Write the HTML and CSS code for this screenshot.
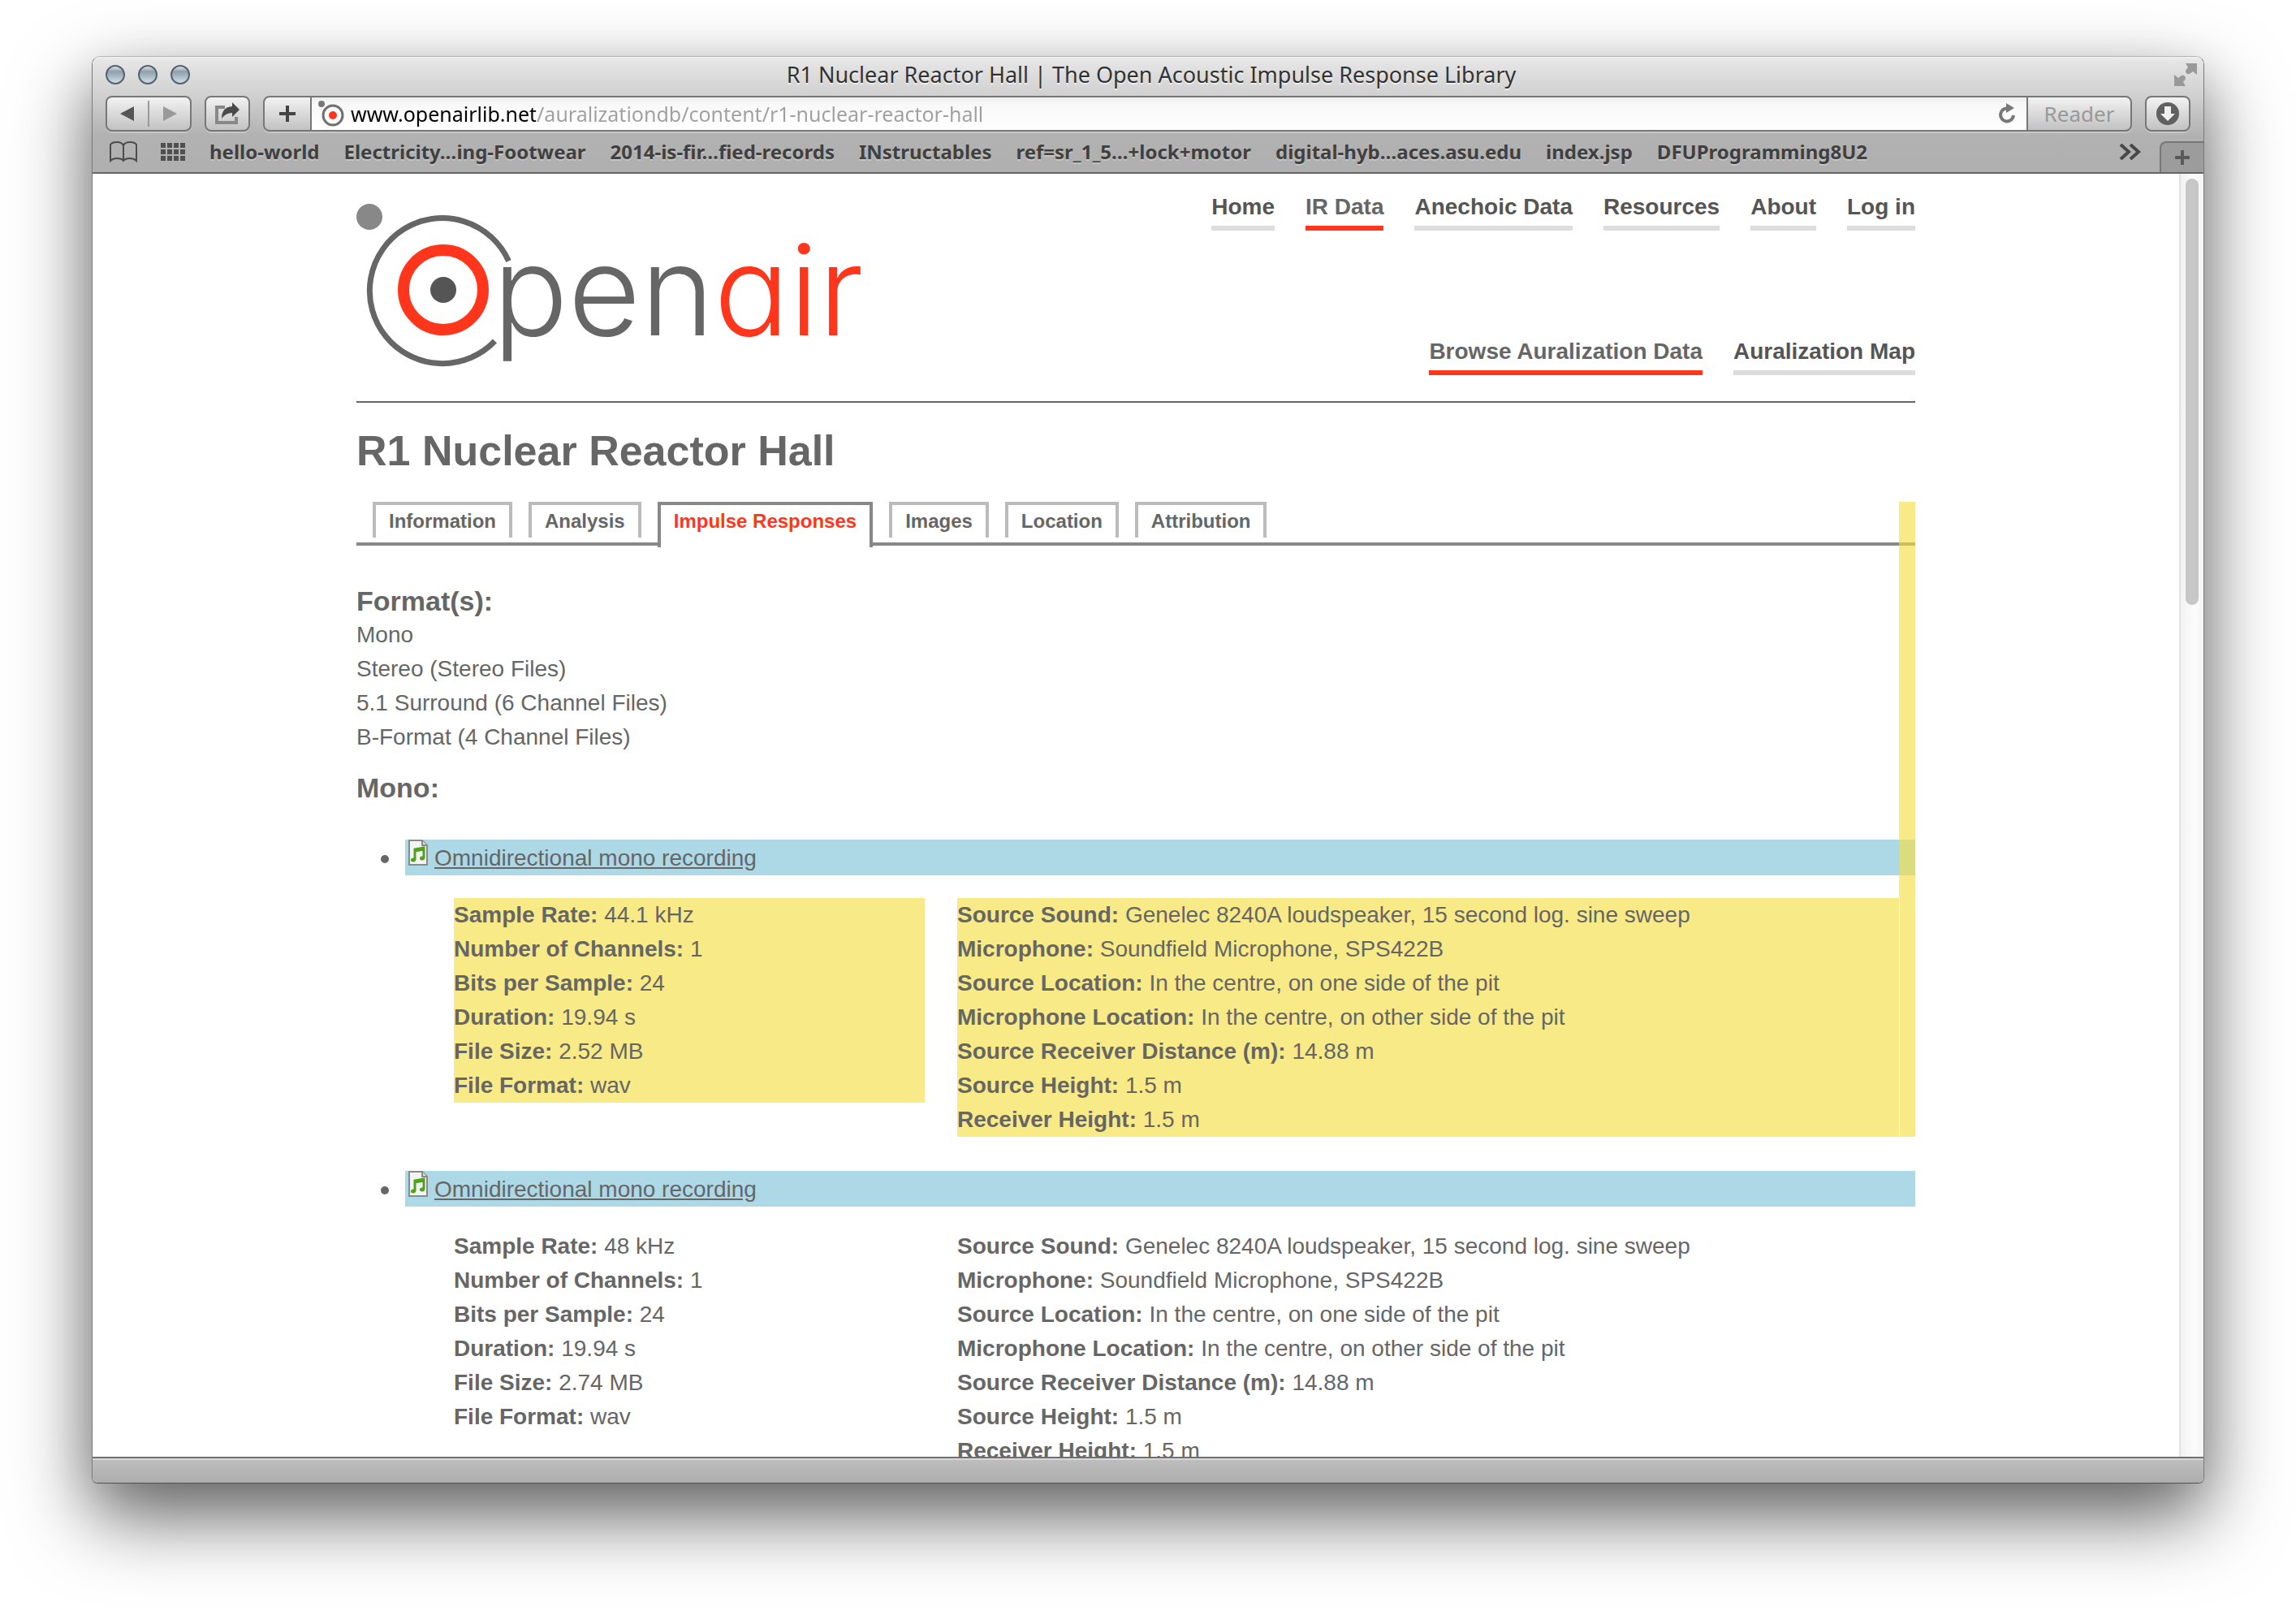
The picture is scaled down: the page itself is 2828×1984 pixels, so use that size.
FILE: index.html
```html
<!DOCTYPE html>
<html lang="en">
<head>
<meta charset="utf-8">
<title>R1 Nuclear Reactor Hall | The Open Acoustic Impulse Response Library</title>
<link rel="stylesheet" href="styles.css">
</head>
<body>
<div class="window">
  <header class="chrome">
    <div class="titlebar">
      <div class="lights">
        <button class="light" aria-label="Close"></button>
        <button class="light" aria-label="Minimize"></button>
        <button class="light" aria-label="Zoom"></button>
      </div>
      <div class="window-title">R1 Nuclear Reactor Hall | The Open Acoustic Impulse Response Library</div>
      <button class="plain fullscreen" aria-label="Full screen">
        <svg width="28" height="28" viewBox="0 0 28 28" fill="#999"><path d="M14 0h14v14l-5-4-4 3q-5 1-5-4l3-4z"/><path d="M0 14l5 4 4-3q5-1 5 4l-3 4 3 5H0z"/></svg>
      </button>
    </div>
    <div class="toolbar">
      <div class="tool nav">
        <button class="plain nav-btn" aria-label="Back"><svg width="20" height="20" viewBox="0 0 20 20"><path d="M18 1v18L1 10z" fill="#555"/></svg></button>
        <button class="plain nav-btn" aria-label="Forward"><svg width="20" height="20" viewBox="0 0 20 20"><path d="M2 1v18l17-9z" fill="#999"/></svg></button>
      </div>
      <button class="tool share" aria-label="Share">
        <svg width="34" height="28" viewBox="0 0 34 28"><path d="M14 6H4v19h24v-7" fill="none" stroke="#888" stroke-width="4"/><path d="M10 20q0-14 13-15V0l9 9-9 9v-5q-8 0-13 7z" fill="#4a4a4a"/></svg>
      </button>
      <div class="tool address">
        <button class="plain add" aria-label="Add bookmark"><svg width="20" height="20" viewBox="0 0 20 20"><path d="M10 0v20M0 10h20" stroke="#444" stroke-width="4"/></svg></button>
        <div class="field">
          <svg class="favicon" width="32" height="32" viewBox="0 0 32 32"><circle cx="4" cy="4" r="4" fill="#777"/><circle cx="18" cy="18" r="12" fill="none" stroke="#707070" stroke-width="3"/><circle cx="18" cy="18" r="5" fill="#ff361c"/></svg>
          <input class="url" type="text" aria-label="Address" value="www.openairlib.net/auralizationdb/content/r1-nuclear-reactor-hall">
          <button class="plain reload" aria-label="Reload"><svg width="24" height="28" viewBox="0 0 24 28"><path d="M13 7.500A8 8 0 1 0 20 16" fill="none" stroke="#777" stroke-width="4"/><path d="M11 1l10 6-10 6z" fill="#777"/></svg></button>
        </div>
        <button class="plain reader">Reader</button>
      </div>
      <button class="tool downloads" aria-label="Downloads">
        <svg width="30" height="30" viewBox="0 0 30 30"><circle cx="15" cy="15" r="14" fill="#606060"/><path d="M11 6h8v9h5l-9 9-9-9h5z" fill="#f0f0f0"/></svg>
      </button>
    </div>
    <nav class="bookmarks">
      <button class="plain" aria-label="Show bookmarks"><svg width="36" height="26" viewBox="0 0 36 26" fill="none" stroke="#4c4c4c" stroke-width="2"><path d="M18 5q-2-4-8-4-6 0-8 3v20q3-3 8-3 6 0 8 3 2-3 8-3 5 0 8 3V4q-2-3-8-3-6 0-8 4zM18 5v19"/></svg></button>
      <button class="plain topsites" aria-label="Top sites"><svg width="32" height="22" viewBox="0 0 32 22"><path d="M0 3h32M0 11h32M0 19h32" stroke="#505050" stroke-width="6" stroke-dasharray="6 2"/></svg></button>
      <div class="bookmark-list">
        <a href="#">hello-world</a>
        <a href="#">Electricity…ing-Footwear</a>
        <a href="#">2014-is-fir…fied-records</a>
        <a href="#">INstructables</a>
        <a href="#">ref=sr_1_5…+lock+motor</a>
        <a href="#">digital-hyb…aces.asu.edu</a>
        <a href="#">index.jsp</a>
        <a href="#">DFUProgramming8U2</a>
      </div>
      <button class="plain more" aria-label="More bookmarks"><svg width="28" height="20" viewBox="0 0 28 20" fill="none" stroke="#484848" stroke-width="4"><path d="M2 1l10 9-10 9M14 1l10 9-10 9"/></svg></button>
      <button class="plain new-tab" aria-label="New tab"><svg width="18" height="18" viewBox="0 0 18 18"><path d="M9 0v18M0 9h18" stroke="#5a5a5a" stroke-width="4"/></svg></button>
    </nav>
  </header>

  <div class="viewport">
    <div class="page">
      <div class="container">
        <div class="site-header">
          <a href="#" class="logo" aria-label="Openair home">
            <svg width="624" height="200" viewBox="0 0 624 200">
              <circle cx="16" cy="17" r="16" fill="#888"/>
              <path d="M187.500 71.500A89.500 89.500 0 1 0 170.500 170" fill="none" stroke="#666" stroke-width="7"/>
              <circle cx="107" cy="107" r="49" fill="none" stroke="#ff361c" stroke-width="14"/>
              <circle cx="107" cy="107" r="16" fill="#555"/>
              <text class="wordmark" x="168" y="163" fill="#666">pen<tspan fill="#ff361c">air</tspan></text>
            </svg>
          </a>
          <div class="menus">
            <nav class="menu">
              <a href="#">Home</a>
              <a href="#" class="current">IR Data</a>
              <a href="#">Anechoic Data</a>
              <a href="#">Resources</a>
              <a href="#">About</a>
              <a href="#">Log in</a>
            </nav>
            <nav class="menu">
              <a href="#" class="current">Browse Auralization Data</a>
              <a href="#">Auralization Map</a>
            </nav>
          </div>
        </div>
        <h1>R1 Nuclear Reactor Hall</h1>
        <main class="content">
          <nav class="tabs">
            <a href="#">Information</a>
            <a href="#">Analysis</a>
            <a href="#" class="active">Impulse Responses</a>
            <a href="#">Images</a>
            <a href="#">Location</a>
            <a href="#">Attribution</a>
          </nav>
          <h2>Format(s):</h2>
          <div class="formats">
            <div>Mono</div>
            <div>Stereo (Stereo Files)</div>
            <div>5.1 Surround (6 Channel Files)</div>
            <div>B-Format (4 Channel Files)</div>
          </div>
          <h2>Mono:</h2>
          <ul class="recordings">
            <li>
              <div class="file"><svg class="file-icon" width="24" height="32" viewBox="0 0 24 32"><path d="M1 1h16l6 6v24H1z" fill="#f4f4f4" stroke="#8a8a86" stroke-width="2"/><path d="M17 1v6h6" fill="#ddd" stroke="#8a8a86" stroke-width="2"/><path d="M8 25V12l11-2v13M8 14l11-2" fill="none" stroke="#4ea21c" stroke-width="3"/><ellipse cx="6" cy="25" rx="3" ry="2.500" fill="#4ea21c"/><ellipse cx="17" cy="23" rx="3" ry="2.500" fill="#4ea21c"/></svg><a href="#">Omnidirectional mono recording</a></div>
              <div class="details">
                <div class="column marked">
                  <div><b>Sample Rate:</b> 44.1 kHz</div>
                  <div><b>Number of Channels:</b> 1</div>
                  <div><b>Bits per Sample:</b> 24</div>
                  <div><b>Duration:</b> 19.94 s</div>
                  <div><b>File Size:</b> 2.52 MB</div>
                  <div><b>File Format:</b> wav</div>
                </div>
                <div class="column wide marked">
                  <div><b>Source Sound:</b> Genelec 8240A loudspeaker, 15 second log. sine sweep</div>
                  <div><b>Microphone:</b> Soundfield Microphone, SPS422B</div>
                  <div><b>Source Location:</b> In the centre, on one side of the pit</div>
                  <div><b>Microphone Location:</b> In the centre, on other side of the pit</div>
                  <div><b>Source Receiver Distance (m):</b> 14.88 m</div>
                  <div><b>Source Height:</b> 1.5 m</div>
                  <div><b>Receiver Height:</b> 1.5 m</div>
                </div>
              </div>
            </li>
            <li>
              <div class="file"><svg class="file-icon" width="24" height="32" viewBox="0 0 24 32"><path d="M1 1h16l6 6v24H1z" fill="#f4f4f4" stroke="#8a8a86" stroke-width="2"/><path d="M17 1v6h6" fill="#ddd" stroke="#8a8a86" stroke-width="2"/><path d="M8 25V12l11-2v13M8 14l11-2" fill="none" stroke="#4ea21c" stroke-width="3"/><ellipse cx="6" cy="25" rx="3" ry="2.500" fill="#4ea21c"/><ellipse cx="17" cy="23" rx="3" ry="2.500" fill="#4ea21c"/></svg><a href="#">Omnidirectional mono recording</a></div>
              <div class="details">
                <div class="column">
                  <div><b>Sample Rate:</b> 48 kHz</div>
                  <div><b>Number of Channels:</b> 1</div>
                  <div><b>Bits per Sample:</b> 24</div>
                  <div><b>Duration:</b> 19.94 s</div>
                  <div><b>File Size:</b> 2.74 MB</div>
                  <div><b>File Format:</b> wav</div>
                </div>
                <div class="column wide">
                  <div><b>Source Sound:</b> Genelec 8240A loudspeaker, 15 second log. sine sweep</div>
                  <div><b>Microphone:</b> Soundfield Microphone, SPS422B</div>
                  <div><b>Source Location:</b> In the centre, on one side of the pit</div>
                  <div><b>Microphone Location:</b> In the centre, on other side of the pit</div>
                  <div><b>Source Receiver Distance (m):</b> 14.88 m</div>
                  <div><b>Source Height:</b> 1.5 m</div>
                  <div><b>Receiver Height:</b> 1.5 m</div>
                </div>
              </div>
            </li>
          </ul>
          <div class="margin-mark"></div>
        </main>
      </div>
    </div>
    <div class="scrollbar"><div class="thumb"></div></div>
  </div>
  <footer class="statusbar"></footer>
</div>
</body>
</html>
```
FILE: styles.css
```css
* { box-sizing: border-box; }

body {
  margin: 0;
  height: 100vh;
  padding: 69px 113px 157px;
  display: flex;
  overflow: hidden;
  background: #fff;
  color: #666;
  font: 28px/42px "Liberation Sans", Arial, sans-serif;
}

a { color: inherit; }
svg { display: block; }
button, input { font: inherit; color: inherit; padding: 0; }

.plain { border: 0; background: none; display: flex; align-items: center; justify-content: center; }

/* Browser window */
.window {
  flex: 1;
  min-width: 0;
  display: flex;
  flex-direction: column;
  overflow: hidden;
  border: 1px solid #7a7a7a;
  border-top-color: #b4b4b4;
  border-bottom-color: #505050;
  border-radius: 10px 10px 7px 7px;
  background: #fff;
  box-shadow: 0 40px 96px rgba(0, 0, 0, 0.6), 0 20px 60px rgba(0, 0, 0, 0.1);
}

.chrome {
  background: linear-gradient(#f0f0f0, #e6e6e6 4px, #d0d0d0 48px, #b2b2b2 96px, #afafaf);
  border-bottom: 2px solid #666;
  font-family: "Noto Sans", "Open Sans", sans-serif;
}

.titlebar { height: 48px; display: flex; align-items: center; padding: 0 8px 4px 16px; }
.lights { display: flex; gap: 16px; flex: 1; }
.light {
  width: 24px;
  height: 24px;
  border: 2px solid #56626e;
  border-radius: 50%;
  background: linear-gradient(#dfe6ea, #8fa0ab 30%, #a9b9c4 60%, #d5dfe6);
}
.window-title { font-size: 27px; line-height: 36px; color: #333; text-shadow: 0 2px 0 #eee; }
.fullscreen { flex: 1; justify-content: flex-end; }

.toolbar { display: flex; padding: 0 16px; gap: 16px; }
.tool {
  height: 44px;
  border: 2px solid #777;
  border-radius: 8px;
  background: linear-gradient(#f2f2f2, #c2c2c2);
  box-shadow: 0 2px 0 #c6c6c6;
  display: flex;
  align-items: center;
  justify-content: center;
}
.nav { width: 106px; }
.nav-btn { flex: 1; height: 32px; }
.nav-btn + .nav-btn { border-left: 2px solid #999; }
.share { width: 56px; }
.downloads { width: 56px; }
.address { flex: 1; align-items: stretch; overflow: hidden; }
.add { width: 58px; border-right: 2px solid #777; }
.field {
  flex: 1;
  display: flex;
  align-items: center;
  padding: 0 12px 0 8px;
  background: linear-gradient(#eee, #f8f8f8 8px, #fff);
}
.url {
  flex: 1;
  min-width: 0;
  height: 36px;
  margin-left: 8px;
  border: 0;
  font-size: 25px;
  color: transparent;
  background: linear-gradient(90deg, #000 228px, #a0a0a0 228px);
  background-clip: text;
  -webkit-background-clip: text;
}
.reader { width: 128px; border-left: 2px solid #777; font-size: 26px; color: #999; }

.bookmarks {
  height: 50px;
  display: flex;
  align-items: center;
  padding-left: 20px;
}
.topsites { margin: 0 28px; }
.bookmark-list { flex: 1; display: flex; gap: 30px; font-size: 24px; font-weight: 700; color: #404040; white-space: nowrap; }
.bookmark-list a { text-decoration: none; text-shadow: 0 2px 0 #c4c4c4; }
.more { margin-right: 22px; }
.new-tab {
  width: 54px;
  height: 38px;
  align-self: flex-end;
  border: 2px solid #777;
  border-width: 2px 0 0 2px;
  border-radius: 8px 0 0 0;
  background: #9c9c9c;
}

/* Web page */
.viewport { flex: 1; min-height: 0; display: flex; }
.page { flex: 1; min-width: 0; overflow: hidden; }
.container { max-width: 1920px; margin: 0 auto; }

.site-header {
  display: flex;
  justify-content: space-between;
  height: 282px;
  padding-top: 36px;
  border-bottom: 2px solid #666;
}
.logo svg { overflow: visible; }
.wordmark {
  font-family: Inter, sans-serif;
  font-size: 154px;
  font-weight: 300;
  font-feature-settings: "cv11";
}
.menus {
  display: flex;
  flex-direction: column;
  justify-content: space-between;
  align-items: flex-end;
  margin: -20px 0 32px;
}
.menu { display: flex; gap: 38px; font-weight: 700; color: #555; }
.menu a { height: 54px; line-height: 42px; padding-top: 4px; text-decoration: none; border-bottom: 6px solid #ddd; }
.menu .current { color: #666; border-color: #ff361c; }

h1 { margin: 28px 0 32px; font-size: 52px; line-height: 62px; }
h2 { margin: 0; font-size: 34px; line-height: 42px; }

.content { position: relative; }
.tabs {
  height: 54px;
  display: flex;
  align-items: flex-start;
  gap: 20px;
  padding-left: 20px;
  border-bottom: 4px solid #888;
  margin-bottom: 47px;
  font-size: 24px;
  font-weight: 700;
}
.tabs a {
  height: 44px;
  line-height: 40px;
  padding: 0 16px;
  border: 4px solid #bbb;
  border-bottom: 0;
  text-decoration: none;
}
.tabs .active { height: 56px; border-color: #888; background: #fff; color: #ff361c; }

.formats { margin-bottom: 20px; }

.recordings { margin: 43px 0 0; padding-left: 60px; list-style: none; }
.recordings li { position: relative; margin-bottom: 42px; }
.recordings li::before {
  content: "";
  position: absolute;
  left: -30px;
  top: 19px;
  width: 10px;
  height: 10px;
  border-radius: 50%;
  background: #666;
}
.file { height: 44px; line-height: 44px; padding-left: 4px; background: #add8e6; }
.file-icon { display: inline-block; vertical-align: baseline; margin-right: 8px; }
.details { display: flex; gap: 40px; padding: 28px 20px 0 60px; align-items: flex-start; }
.column { width: 580px; }
.column.wide { flex: 1; }
.marked { background: #f8ea87; }

/* Highlight along the right margin of the page body */
.margin-mark {
  position: absolute;
  top: 0;
  right: 0;
  width: 20px;
  height: 782px;
  background: rgba(244, 222, 65, 0.63);
}
.wide.marked { position: relative; z-index: 1; box-shadow: 1px 0 0 #fff; }

.scrollbar {
  width: 30px;
  padding: 6px;
  border-left: 2px solid #e2e2e2;
  background: linear-gradient(90deg, #f2f2f2, #fcfcfc 60%, #f4f4f4);
}
.thumb { width: 16px; height: 33.5%; border-radius: 8px; background: #c7c7c7; }

.statusbar {
  height: 32px;
  border-top: 2px solid #707070;
  box-shadow: inset 0 2px 0 #d8d8d8;
  background: linear-gradient(#bebebe, #aeaeae);
}
```
